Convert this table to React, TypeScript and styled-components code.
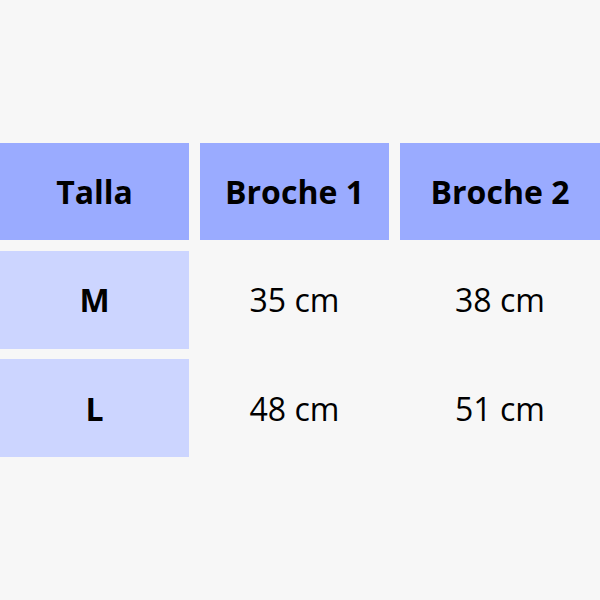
import React from "react";
import styled, { createGlobalStyle } from "styled-components";

const Global = createGlobalStyle`
  html, body {
    margin: 0;
    padding: 0;
    background: #f7f7f7;
  }
  body {
    font-family: "Open Sans", "Liberation Sans", sans-serif;
    color: #000;
  }
`;

const Page = styled.div`
  width: 600px;
  height: 600px;
  padding-top: 143px;
  box-sizing: border-box;
  overflow: hidden;
`;

const Table = styled.div`
  display: grid;
  grid-template-columns: 189px 189px 200px;
  grid-template-rows: 97px 98px 98px;
  column-gap: 11px;
  row-gap: 10.5px;
`;

const Cell = styled.div<{ $tone?: "head" | "label" }>`
  display: flex;
  align-items: center;
  justify-content: center;
  background: ${(p) =>
    p.$tone === "head" ? "#9aabff" : p.$tone === "label" ? "#ccd5ff" : "transparent"};
  font-size: 32px;
  font-weight: ${(p) => (p.$tone ? 700 : 400)};
`;

const rows = [
  { size: "M", a: "35 cm", b: "38 cm" },
  { size: "L", a: "48 cm", b: "51 cm" },
];

export default function App() {
  return (
    <Page>
      <Global />
      <Table>
        <Cell $tone="head">Talla</Cell>
        <Cell $tone="head">Broche 1</Cell>
        <Cell $tone="head">Broche 2</Cell>
        {rows.map((r) => (
          <React.Fragment key={r.size}>
            <Cell $tone="label">{r.size}</Cell>
            <Cell>{r.a}</Cell>
            <Cell>{r.b}</Cell>
          </React.Fragment>
        ))}
      </Table>
    </Page>
  );
}
